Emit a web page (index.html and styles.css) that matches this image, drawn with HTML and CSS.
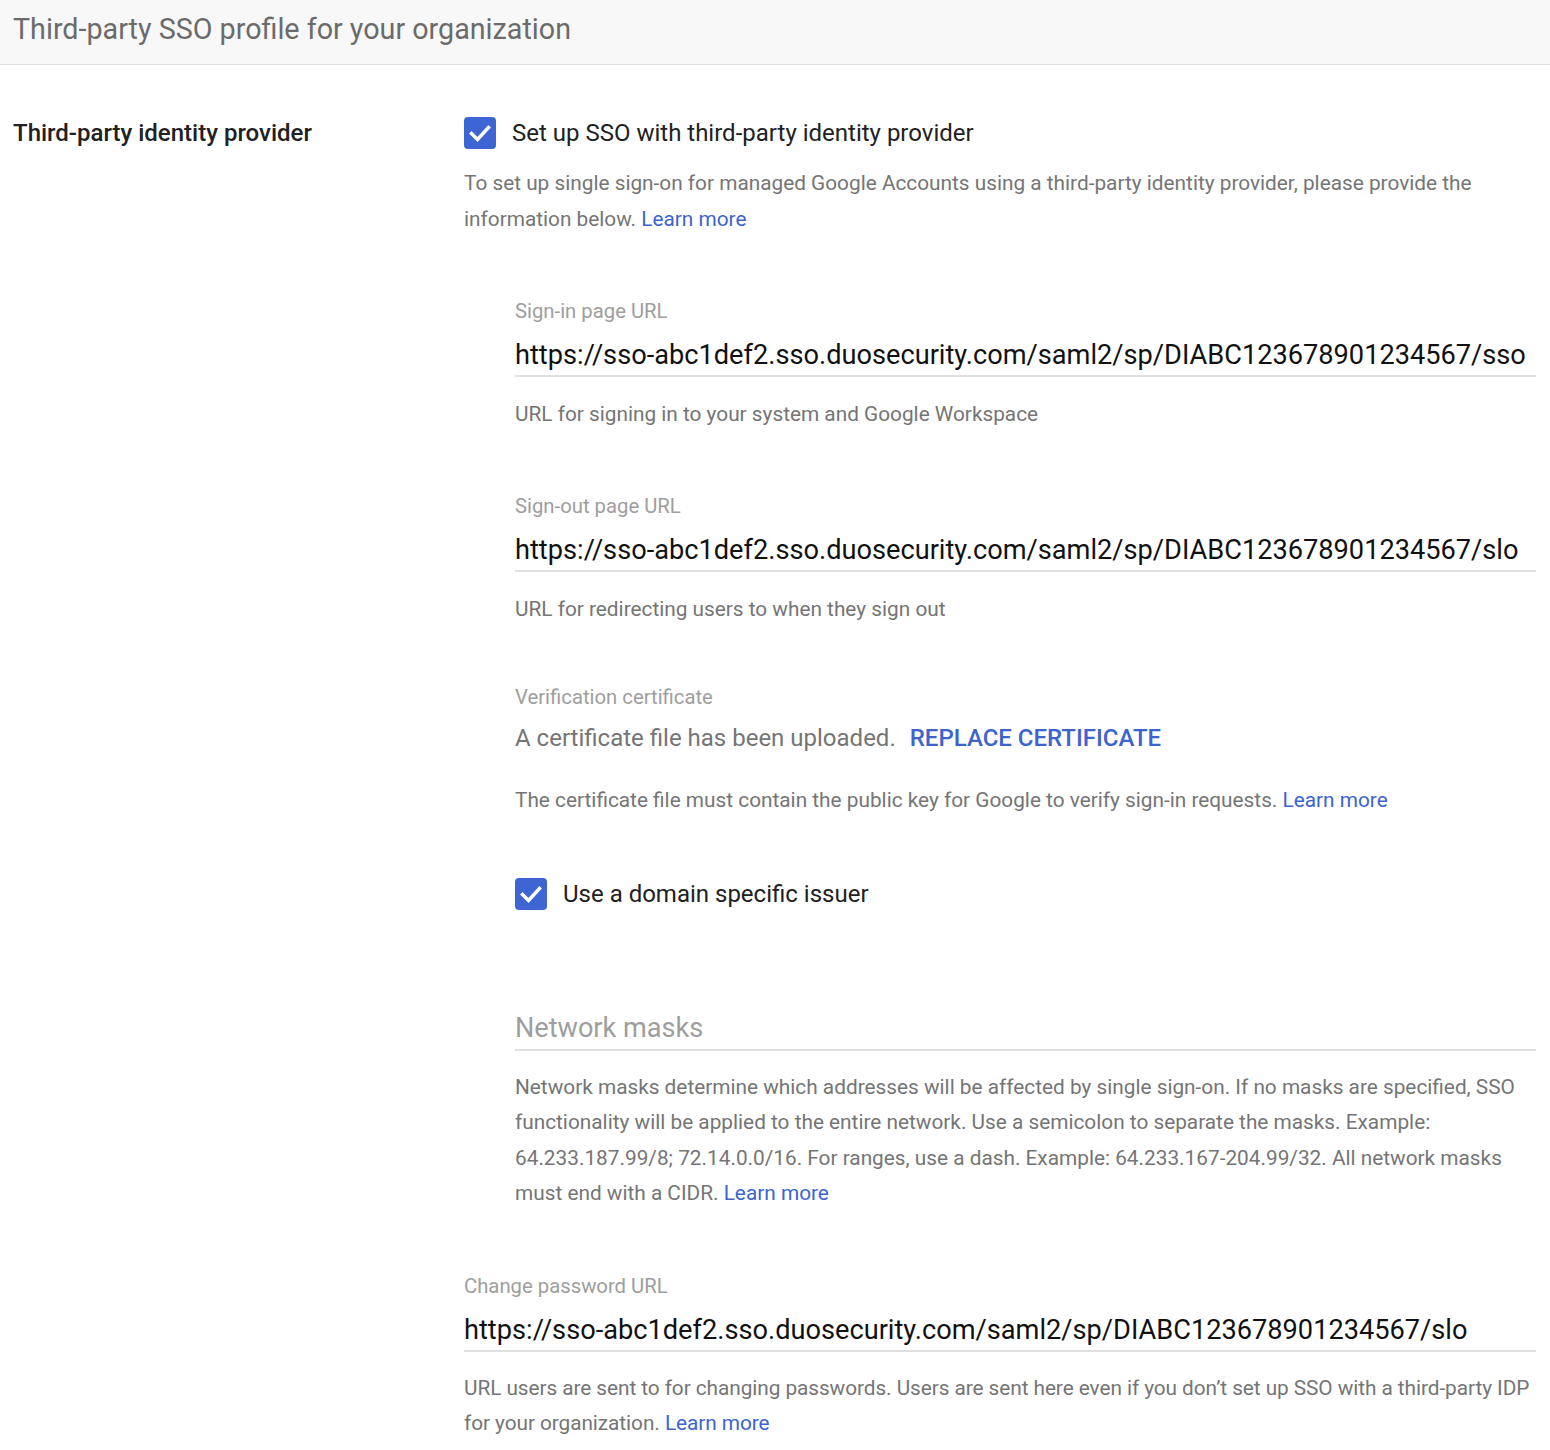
FILE: index.html
```html
<!DOCTYPE html>
<html lang="en">
<head>
<meta charset="utf-8">
<title>Third-party SSO profile</title>
<link rel="stylesheet" href="styles.css">
</head>
<body>
<header class="page-header">
  <h1 class="page-title">Third-party SSO profile for your organization</h1>
</header>
<main class="setting">
  <div class="setting-name">Third-party identity provider</div>
  <div class="setting-body">
    <label class="check-row">
      <svg class="checkbox" viewBox="0 0 32 32" width="32" height="32" aria-hidden="true">
        <rect x="0" y="0" width="32" height="32" rx="4" fill="#3d66d4"/>
        <path d="M7.5 16.5 L13.5 22.5 L24.5 10.5" fill="none" stroke="#fff" stroke-width="3.4" stroke-linecap="square"/>
      </svg>
      <span class="check-label">Set up SSO with third-party identity provider</span>
    </label>
    <p class="desc">To set up single sign-on for managed Google Accounts using a third-party identity provider, please provide the information below. <a class="link" href="#">Learn more</a></p>

    <div class="nested">
      <div class="field field-first">
        <div class="field-label">Sign-in page URL</div>
        <div class="field-value">https://sso-abc1def2.sso.duosecurity.com/saml2/sp/DIABC123678901234567/sso</div>
        <p class="hint">URL for signing in to your system and Google Workspace</p>
      </div>
      <div class="field">
        <div class="field-label">Sign-out page URL</div>
        <div class="field-value">https://sso-abc1def2.sso.duosecurity.com/saml2/sp/DIABC123678901234567/slo</div>
        <p class="hint">URL for redirecting users to when they sign out</p>
      </div>
      <div class="field field-cert">
        <div class="field-label">Verification certificate</div>
        <div class="cert-row"><span class="cert-text">A certificate file has been uploaded.</span><a class="cert-btn" href="#">REPLACE CERTIFICATE</a></div>
        <p class="hint hint-cert">The certificate file must contain the public key for Google to verify sign-in requests. <a class="link" href="#">Learn more</a></p>
      </div>
      <label class="check-row check-issuer">
        <svg class="checkbox" viewBox="0 0 32 32" width="32" height="32" aria-hidden="true">
          <rect x="0" y="0" width="32" height="32" rx="4" fill="#3d66d4"/>
          <path d="M7.5 16.5 L13.5 22.5 L24.5 10.5" fill="none" stroke="#fff" stroke-width="3.4" stroke-linecap="square"/>
        </svg>
        <span class="check-label">Use a domain specific issuer</span>
      </label>
      <div class="masks">
        <div class="masks-input">Network masks</div>
        <p class="hint masks-hint">Network masks determine which addresses will be affected by single sign-on. If no masks are specified, SSO functionality will be applied to the entire network. Use a semicolon to separate the masks. Example: 64.233.187.99/8; 72.14.0.0/16. For ranges, use a dash. Example: 64.233.167-204.99/32. All network masks must end with a CIDR. <a class="link" href="#">Learn more</a></p>
      </div>
    </div>

    <div class="field field-pw">
      <div class="field-label">Change password URL</div>
      <div class="field-value">https://sso-abc1def2.sso.duosecurity.com/saml2/sp/DIABC123678901234567/slo</div>
      <p class="hint hint-pw">URL users are sent to for changing passwords. Users are sent here even if you don’t set up SSO with a third-party IDP for your organization. <a class="link" href="#">Learn more</a></p>
    </div>
  </div>
</main>
</body>
</html>
```

FILE: styles.css
```css
* { box-sizing: border-box; }
html, body { margin: 0; padding: 0; background: #fff; }
body {
  font-family: Roboto, "Noto Sans", Arial, sans-serif;
  color: #212121;
}
p { margin: 0; }
a { text-decoration: none; }

.page-header {
  height: 65px;
  background: #f8f8f8;
  border-bottom: 1px solid #e2e2e2;
  padding: 10px 13px 0;
}
.page-title {
  margin: 0;
  font-size: 28.7px;
  font-weight: 400;
  line-height: 38px;
  color: #6b6b6b;
}

.setting {
  display: grid;
  grid-template-columns: 451px 1fr;
  padding: 52px 14px 0 13px;
}
.setting-name {
  font-size: 24px;
  font-weight: 500;
  line-height: 32px;
  color: #212121;
}

.check-row {
  display: flex;
  align-items: center;
  height: 32px;
}
.checkbox { flex: none; display: block; }
.check-label {
  margin-left: 16px;
  font-size: 24px;
  color: #212121;
}

.desc, .hint {
  font-size: 20.8px;
  line-height: 36px;
  color: #757575;
}
.desc { margin-top: 16px; }
.link { color: #3d63cf; }

.nested { padding-left: 51px; }

.field-label {
  font-size: 20.3px;
  line-height: 24px;
  color: #9e9e9e;
}
.field-value {
  margin-top: 14px;
  font-size: 27.2px;
  line-height: 36px;
  padding-bottom: 2px;
  border-bottom: 2px solid #e0e0e0;
  color: #111;
  white-space: nowrap;
}
.hint { margin-top: 19px; }

.field-first { margin-top: 62px; }
.field { margin-top: 62px; }
.field-cert { margin-top: 58px; }

.cert-row {
  margin-top: 11px;
  font-size: 24px;
  line-height: 36px;
  display: flex;
  gap: 14px;
}
.cert-text { color: #757575; }
.cert-btn { color: #3d63cf; font-weight: 500; }
.hint-cert { margin-top: 26px; }

.check-issuer { margin-top: 60px; }

.masks { margin-top: 100px; }
.masks-input {
  font-size: 27.1px;
  line-height: 36px;
  padding-bottom: 3px;
  border-bottom: 2px solid #e0e0e0;
  color: #9e9e9e;
}
.masks-hint { line-height: 35.33px; }

.field-pw { margin-top: 63px; }
.hint-pw { line-height: 35px; letter-spacing: -0.06px; margin-right: -4px; }
```
